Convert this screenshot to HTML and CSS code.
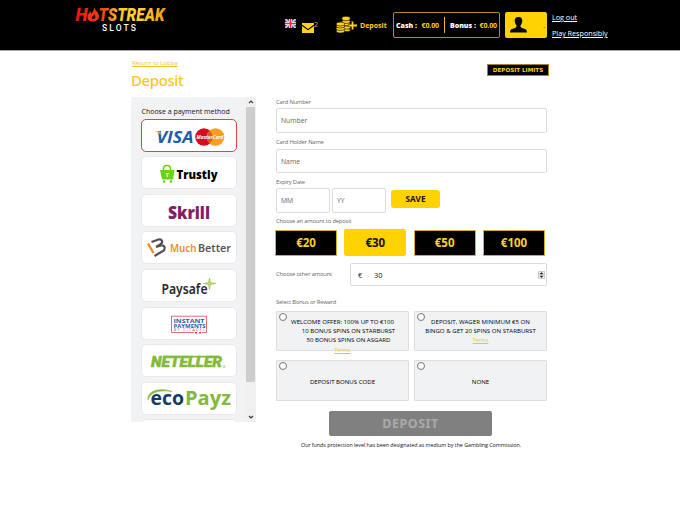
FILE: index.html
```html
<!DOCTYPE html>
<html lang="en">
<head>
<meta charset="utf-8">
<title>Deposit</title>
<link rel="stylesheet" href="styles.css">
</head>
<body>
<header class="topbar">
  <svg class="logo" width="92" height="28" viewBox="0 0 92 28">
    <defs>
      <linearGradient id="heat" gradientUnits="userSpaceOnUse" x1="0" y1="0" x2="90" y2="0">
        <stop offset="0" stop-color="#e8150c"/><stop offset=".32" stop-color="#f04a12"/><stop offset=".46" stop-color="#ffc42c"/><stop offset=".68" stop-color="#ffd43a"/><stop offset="1" stop-color="#f39a14"/>
      </linearGradient>
    </defs>
    <g class="logo-hot" fill="url(#heat)">
      <text x="-.5" y="14.200" textLength="12" lengthAdjust="spacingAndGlyphs">H</text>
      <text x="22.500" y="14.200" textLength="66" lengthAdjust="spacingAndGlyphs">TSTREAK</text>
    </g>
    <path d="M18 0c1 4 5 5 5 9 0 3-2 5.500-6 5.500-4 0-6-2-5.500-5.500 0-2 2.500-3 2.500-5 1 1 1 2 1 3 2-2 3-4 3-7z" fill="#f23214"/>
    <path d="M18 7c1 2 2 3 1 4-1 2-4 1-3-1 0-1 2-1 2-3z" fill="#190000"/>
    <text class="logo-slots" x="26" y="24.200" textLength="34" fill="#fff">SLOTS</text>
  </svg>
  <svg class="flag" width="11" height="9" viewBox="0 0 11 9">
    <path fill="#3a3f8c" d="M0 0h11v9H0z"/>
    <path d="M0 0l11 9M11 0L0 9" stroke="#fff" stroke-width="1.7"/>
    <path d="M0 0l11 9M11 0L0 9" stroke="#e0596b" stroke-width=".7"/>
    <path d="M5.500 0v9M0 4.500h11" stroke="#fff" stroke-width="3"/>
    <path d="M5.500 0v9M0 4.500h11" stroke="#e22a45" stroke-width="1.700"/>
  </svg>
  <svg class="mail" width="12" height="10" viewBox="0 0 12 10">
    <path d="M0 0h12v1.500L6 6 0 1.500z" fill="#ffd21e"/><path d="M0 3l6 4.300L12 3v7H0z" fill="#ffd21e"/>
  </svg>
  <span class="mail-count">2</span>
  <svg class="coins" width="21" height="18" viewBox="0 0 21 18">
    <g fill="#ffd21e" stroke="#000" stroke-width=".6">
      <ellipse cx="10" cy="8" rx="4.200" ry="2"/><ellipse cx="10" cy="5.500" rx="4.200" ry="2"/><ellipse cx="10" cy="2.500" rx="4.200" ry="2.200"/>
      <ellipse cx="10.500" cy="14" rx="4" ry="1.600"/><ellipse cx="10.500" cy="11.500" rx="4" ry="1.600"/>
      <ellipse cx="4.500" cy="15" rx="4.300" ry="2"/><ellipse cx="4.500" cy="12.500" rx="4.300" ry="2"/><ellipse cx="4.500" cy="10" rx="4.300" ry="2"/><ellipse cx="4.500" cy="8" rx="4.300" ry="2"/>
    </g>
    <path d="M16.500 5.500v8M12.500 9.500h8" stroke="#000" stroke-width="3.200"/>
    <path d="M16.500 5.500v8M12.500 9.500H21" stroke="#ffd21e" stroke-width="1.800"/>
  </svg>
  <a class="top-deposit">Deposit</a>
  <div class="balances">
    <div class="balance cash"><b>Cash :</b><span>€0.00</span></div>
    <div class="balance bonus"><b>Bonus :</b><span>€0.00</span></div>
  </div>
  <div class="account">
    <svg width="17" height="16" viewBox="0 0 17 16"><path d="M8.500 0c3 0 4 2 3.700 4.500-.2 2-1 3-1.700 4 0 2 .5 2.200 3 3 2.500.700 3.500 1.500 3.500 4H0c0-2.500 1-3.300 3.500-4 2.500-.800 3-1 3-3-.700-1-1.500-2-1.700-4C4.500 2 5.500 0 8.500 0z" fill="#080600"/></svg>
    <span>.</span>
  </div>
  <nav class="top-links"><a>Log out</a><a>Play Responsibly</a></nav>
</header>
<main class="page">
  <div class="page-head">
    <div><a class="back">Return to Lobby</a><h1>Deposit</h1></div>
    <button class="limits">DEPOSIT LIMITS</button>
  </div>
  <div class="columns">
    <aside class="methods">
      <div class="method-list">
        <h2>Choose a payment method</h2>
        <div class="method selected"><svg width="94" height="32" viewBox="0 0 94 32">
          <text class="visa" x="14.500" y="23" textLength="37" lengthAdjust="spacingAndGlyphs" fill="#1c5ea8">VISA</text>
          <path d="M12.500 11.500H18l2 5c-2-3-4-4-7.500-5z" fill="#f3a11b"/>
          <circle cx="62" cy="17" r="8.800" fill="#d3101d"/><circle cx="73.500" cy="17" r="8.800" fill="#f99d1c"/>
          <path d="M67.700 10.500a8.800 8.800 0 0 1 0 13 8.800 8.800 0 0 1 0-13" fill="#dd5a19"/>
          <text class="mc" x="54.500" y="19" textLength="27" lengthAdjust="spacingAndGlyphs" fill="#fff">MasterCard</text>
        </svg></div>
        <div class="method"><svg width="94" height="32" viewBox="0 0 94 32">
          <path d="M18 13h14.500l-1.500 9.500H20z" fill="#68d40d"/><path d="M21.500 13.500v-2c0-4 7-4 7 0v2" fill="none" stroke="#68d40d" stroke-width="1.600"/><circle cx="22" cy="24.500" r="1.300" fill="#68d40d"/><circle cx="29" cy="24.500" r="1.300" fill="#68d40d"/>
          <text class="bag-t" x="23.500" y="20" fill="#fff">T</text>
          <text class="trustly" x="34.500" y="22" textLength="41" lengthAdjust="spacingAndGlyphs">Trustly</text>
        </svg></div>
        <div class="method"><svg width="94" height="32" viewBox="0 0 94 32"><text class="skrill" x="26" y="23.500" textLength="42" lengthAdjust="spacingAndGlyphs" fill="#811e68">Skrill</text></svg></div>
        <div class="method"><svg width="94" height="32" viewBox="0 0 94 32">
          <path d="M6 11.500l5.500 9.500" stroke="#f18b25" stroke-width="2.400"/><path d="M9.500 10l7-2.500c3.500-1 5 3 2 4.800L14 15l5-1.500c4-1 5 4 1.500 5.800L12.500 24" fill="none" stroke="#505256" stroke-width="2.200"/>
          <text class="much" x="28" y="19.500" textLength="26.500" lengthAdjust="spacingAndGlyphs" fill="#f18b25">Much</text><text class="much" x="56" y="19.500" textLength="33" lengthAdjust="spacingAndGlyphs" fill="#55565a">Better</text>
        </svg></div>
        <div class="method"><svg width="94" height="32" viewBox="0 0 94 32">
          <text class="paysafe" x="19.500" y="23.500" textLength="46" lengthAdjust="spacingAndGlyphs" fill="#292929">Paysafe</text>
          <path d="M67.500 8l1 4.500L74 13.500l-5.500 1-1 5-1-5-5-1 5-1z" fill="#ddd83b" stroke="#78c453" stroke-width=".6"/>
        </svg></div>
        <div class="method"><svg width="94" height="32" viewBox="0 0 94 32">
          <path d="M60 24.500h4.500V8.200h-35v16.300H52" fill="none" stroke="#d85b6a" stroke-width=".9"/>
          <g class="instant" fill="#2462a8"><text x="31.500" y="14.500" textLength="31" lengthAdjust="spacingAndGlyphs">INSTANT</text><text x="31.500" y="19.500" textLength="32" lengthAdjust="spacingAndGlyphs">PAYMENTS</text></g>
          <text class="citadel" x="32" y="23.300" textLength="31" fill="#cc3e50">BY CITADEL</text><path d="M53 24.800h2M57 24.800h2" stroke="#cc3e50" stroke-width="1.500"/>
        </svg></div>
        <div class="method"><svg width="94" height="32" viewBox="0 0 94 32">
          <text class="neteller" x="9" y="22.300" textLength="71" lengthAdjust="spacingAndGlyphs" fill="#83ba3b" stroke="#83ba3b" stroke-width=".5">NETELLER</text>
          <path d="M21 11.700h56" stroke="#83ba3b" stroke-width="1.800"/><circle cx="82" cy="21.500" r="1.200" fill="none" stroke="#83ba3b" stroke-width=".5"/>
        </svg></div>
        <div class="method"><svg width="94" height="32" viewBox="0 0 94 32">
          <path d="M6 17C5 8 17 4 30 8.500 18 6.500 8 9 6 17z" fill="#83ba3b" stroke="#83ba3b" stroke-width=".7"/>
          <text class="eco" x="8.500" y="21.800" textLength="33.500" lengthAdjust="spacingAndGlyphs" fill="#123d68">eco</text><text class="eco" x="43" y="21.800" textLength="46" lengthAdjust="spacingAndGlyphs" fill="#83ba3b">Payz</text>
        </svg></div>
        <div class="method"></div>
      </div>
      <div class="scrollbar">
        <svg width="10" height="10" viewBox="0 0 10 10"><path d="M3 6l2-2 2 2" fill="none" stroke="#444" stroke-width="1.200"/></svg>
        <div class="thumb"></div>
        <svg width="10" height="10" viewBox="0 0 10 10"><path d="M3 4l2 2 2-2" fill="none" stroke="#333" stroke-width="1.200"/></svg>
      </div>
    </aside>
    <form class="form">
      <label>Card Number</label>
      <div class="field number">Number</div>
      <label>Card Holder Name</label>
      <div class="field name">Name</div>
      <label>Expiry Date</label>
      <div class="expiry"><div class="field">MM</div><div class="field">YY</div><div class="save">SAVE</div></div>
      <label class="choose">Choose an amount to deposit</label>
      <div class="amounts"><div>€20</div><div class="active">€30</div><div>€50</div><div>€100</div></div>
      <div class="other">
        <label>Choose other amount</label>
        <div class="field"><span class="euro">€</span><span>30</span>
          <svg class="spinner" width="7" height="8" viewBox="0 0 7 8"><path d="M.5.500h6v7h-6z" fill="#f0f0f0" stroke="#b5b5b5" stroke-width=".7"/><path d="M1.500 3.200l2-2 2 2zM1.500 4.800l2 2 2-2z" fill="#111"/></svg>
        </div>
      </div>
      <label class="select-bonus">Select Bonus or Reward</label>
      <div class="bonuses">
        <div class="bonus-card"><i class="radio"></i><p><span class="l1">WELCOME OFFER: 100% UP TO €100</span><span class="l2">10 BONUS SPINS ON STARBURST</span><span class="l3">50 BONUS SPINS ON ASGARD</span></p><a>Terms</a></div>
        <div class="bonus-card"><i class="radio"></i><p><span>DEPOSIT, WAGER MINIMUM €5 ON</span><span>BINGO &amp; GET 20 SPINS ON STARBURST</span></p><a>Terms</a></div>
        <div class="bonus-card single"><i class="radio"></i><p>DEPOSIT BONUS CODE</p></div>
        <div class="bonus-card single"><i class="radio"></i><p>NONE</p></div>
      </div>
      <div class="submit">DEPOSIT</div>
      <p class="notice">Our funds protection level has been designated as medium by the Gambling Commission.</p>
    </form>
  </div>
</main>
</body>
</html>
```

FILE: styles.css
```css
* { box-sizing: border-box; }
body { margin: 0; background: #fff; font-family: "Open Sans", "Noto Sans", sans-serif; color: #111; overflow: hidden; white-space: nowrap; }
svg { display: block; flex: none; }
h1, h2, p { margin: 0; font-weight: 400; }

.topbar { height: 51px; background: #000; border-bottom: 1px solid #aaa; display: flex; align-items: flex-start; padding-left: 76px; }
.logo { margin-top: 7px; overflow: visible; }
.logo-hot { font: italic 900 18px Roboto, sans-serif; }
.logo-slots { font: 500 8.5px Roboto, sans-serif; }
.flag { margin: 19px 0 0 117px; }
.mail { margin: 23px 0 0 6px; }
.mail-count { width: 22px; font-size: 7px; line-height: 8px; margin-top: 21px; color: #bbb38a; }
.coins { margin-top: 16px; }
.top-deposit { width: 36px; padding-left: 3px; margin-top: 20.5px; font-size: 7px; line-height: 10px; font-weight: 700; color: #ffd21e; }
.balances { margin-top: 12px; width: 107px; height: 26px; border: 1px solid #b08f18; border-radius: 2px; display: flex; align-items: center; font-size: 7px; font-weight: 700; }
.balance { display: flex; align-items: center; justify-content: space-between; height: 16px; }
.cash { width: 51px; padding: 0 5px 0 2px; border-right: 1px solid #e8bd1b; color: #fff; }
.bonus { flex: 1; padding: 0 2px 0 5px; color: #fff; }
.balance span { color: #ffd21e; letter-spacing: -.1px; }
.account { margin: 12px 0 0 5px; width: 42px; height: 26px; background: #ffd200; border-radius: 2px; display: flex; align-items: center; justify-content: space-between; padding: 0 2px 0 5px; font-size: 7px; }
.top-links { margin: 12px 0 0 5px; display: flex; flex-direction: column; gap: 6px; font-size: 7.2px; line-height: 10px; color: #fff; text-decoration: underline; }

.page { width: 416px; margin-left: 131px; }
.page-head { height: 46px; display: flex; justify-content: space-between; align-items: flex-start; }
.back { display: block; margin: 7px 0 0 1px; font-size: 6.1px; line-height: 9px; color: #f2c21a; text-decoration: underline; }
h1 { font: 500 15px/20px "Noto Sans", sans-serif; letter-spacing: -.4px; color: #f8c820; margin-top: 2.5px; }
.limits { width: 62px; height: 12px; margin: 13px -2px 0 0; padding: 0; background: #000; border: 1px solid #a48515; color: #ffd21e; font: 700 5.6px "DejaVu Sans", sans-serif; }
.columns { display: flex; gap: 20px; }

.methods { width: 125px; height: 325px; background: #f1f2f4; display: flex; overflow: hidden; }
.method-list { width: 115px; padding: 10px 10px 0; display: flex; flex-direction: column; gap: 4.6px; }
h2 { font-size: 7px; line-height: 10px; margin: 0 0 -2.9px .5px; }
.method { flex: none; width: 95.5px; height: 33px; background: #fff; border: 1px solid #e8e9ec; border-radius: 5px; }
.method.selected { border-color: #d5464e; }
.scrollbar { width: 10px; background: #f0f0f1; display: flex; flex-direction: column; }
.thumb { width: 9px; height: 275px; margin-bottom: 30px; background: #cdcdcd; }
.visa { font: italic 700 16px "Open Sans", sans-serif; }
.mc { font: italic 700 5.5px "Open Sans", sans-serif; }
.bag-t { font: 700 6px "Open Sans", sans-serif; }
.trustly { font: 800 13px "Open Sans", sans-serif; }
.skrill { font: 800 18px "Open Sans", sans-serif; }
.much { font: 600 11.5px "Noto Sans", sans-serif; }
.paysafe { font: 600 15px "Noto Sans", sans-serif; }
.instant { font: 700 6px "Open Sans", sans-serif; }
.citadel { font: 3.5px "Open Sans", sans-serif; }
.neteller { font: italic 900 15px Roboto, sans-serif; }
.eco { font: 700 20px "Open Sans", sans-serif; }

.form { width: 271px; display: flex; flex-direction: column; }
label { display: block; font-size: 5.8px; line-height: 10px; color: #666; letter-spacing: -.17px; }
.field { background: #fff; border: 1px solid #dcdcdc; border-radius: 2px; padding-left: 4px; display: flex; align-items: center; font-size: 6.8px; color: #666; }
.number { height: 25px; margin: 1px 0 4px; }
.name { height: 24px; margin: 2px 0 4px; }
.expiry { display: flex; align-items: flex-start; gap: 2px; }
.expiry .field { width: 54px; height: 25px; margin-top: 1px; }
.save { width: 49px; height: 18px; margin: 3px 0 0 3px; border-radius: 3px; background: #ffd200; color: #111; font-size: 8.2px; line-height: 18px; font-weight: 700; text-align: center; }
.choose { margin-top: 3px; }
.amounts { display: flex; justify-content: space-between; align-items: center; height: 27px; margin: 3px 2px 0 -1px; }
.amounts div { width: 62px; height: 26px; background: #000; border: 1px solid #d7b11b; border-radius: 1px; color: #ffd21e; font: 700 11.5px/24px "Noto Sans", sans-serif; text-align: center; }
.amounts .active { height: 27px; background: #ffd200; border-color: #ffd200; color: #111; border-radius: 2px; line-height: 25px; }
.other { display: flex; justify-content: space-between; align-items: center; margin-top: 7px; }
.other label { margin-top: -1px; }
.other .field { width: 197px; height: 23px; padding: 0 1px 0 7px; color: #222; font-size: 7.4px; }
.euro { width: 16px; }
.spinner { margin-left: auto; }
.select-bonus { margin-top: 11px; }
.bonuses { display: grid; grid-template-columns: 133px 133px; grid-template-rows: 40px 41px; column-gap: 5px; row-gap: 9px; margin-top: 4px; }
.bonus-card { position: relative; background: #f1f2f4; border: 1px solid #ddd; border-radius: 1px; padding-top: 5px; text-align: center; color: #000; font-size: 6.1px; line-height: 9.2px; font-weight: 500; }
.bonus-card p, .bonus-card a { font-weight: inherit; }
.bonus-card span { display: block; }
.bonus-card .l2 { padding-left: 12px; }
.bonus-card .l3 { padding-left: 12px; }
.bonus-card .l1 { padding-left: 0; }
.bonus-card a { display: block; color: #f2c21a; text-decoration: underline; font-size: 5.4px; font-weight: 400; line-height: 10px; }
.single { padding-top: 15.5px; }
.radio { position: absolute; left: 2px; top: 1px; width: 8px; height: 8px; border: 1px solid #777; border-radius: 50%; background: #fff; }
.submit { width: 163px; height: 25px; margin: 10px 0 0 53px; background: #808080; border-radius: 2px; color: #aaa; font: 700 12.5px/25px "Noto Sans", sans-serif; letter-spacing: .5px; text-align: center; }
.notice { font-size: 5.4px; line-height: 8px; color: #111; letter-spacing: -.06px; margin: 5px 0 0 25px; }
```
